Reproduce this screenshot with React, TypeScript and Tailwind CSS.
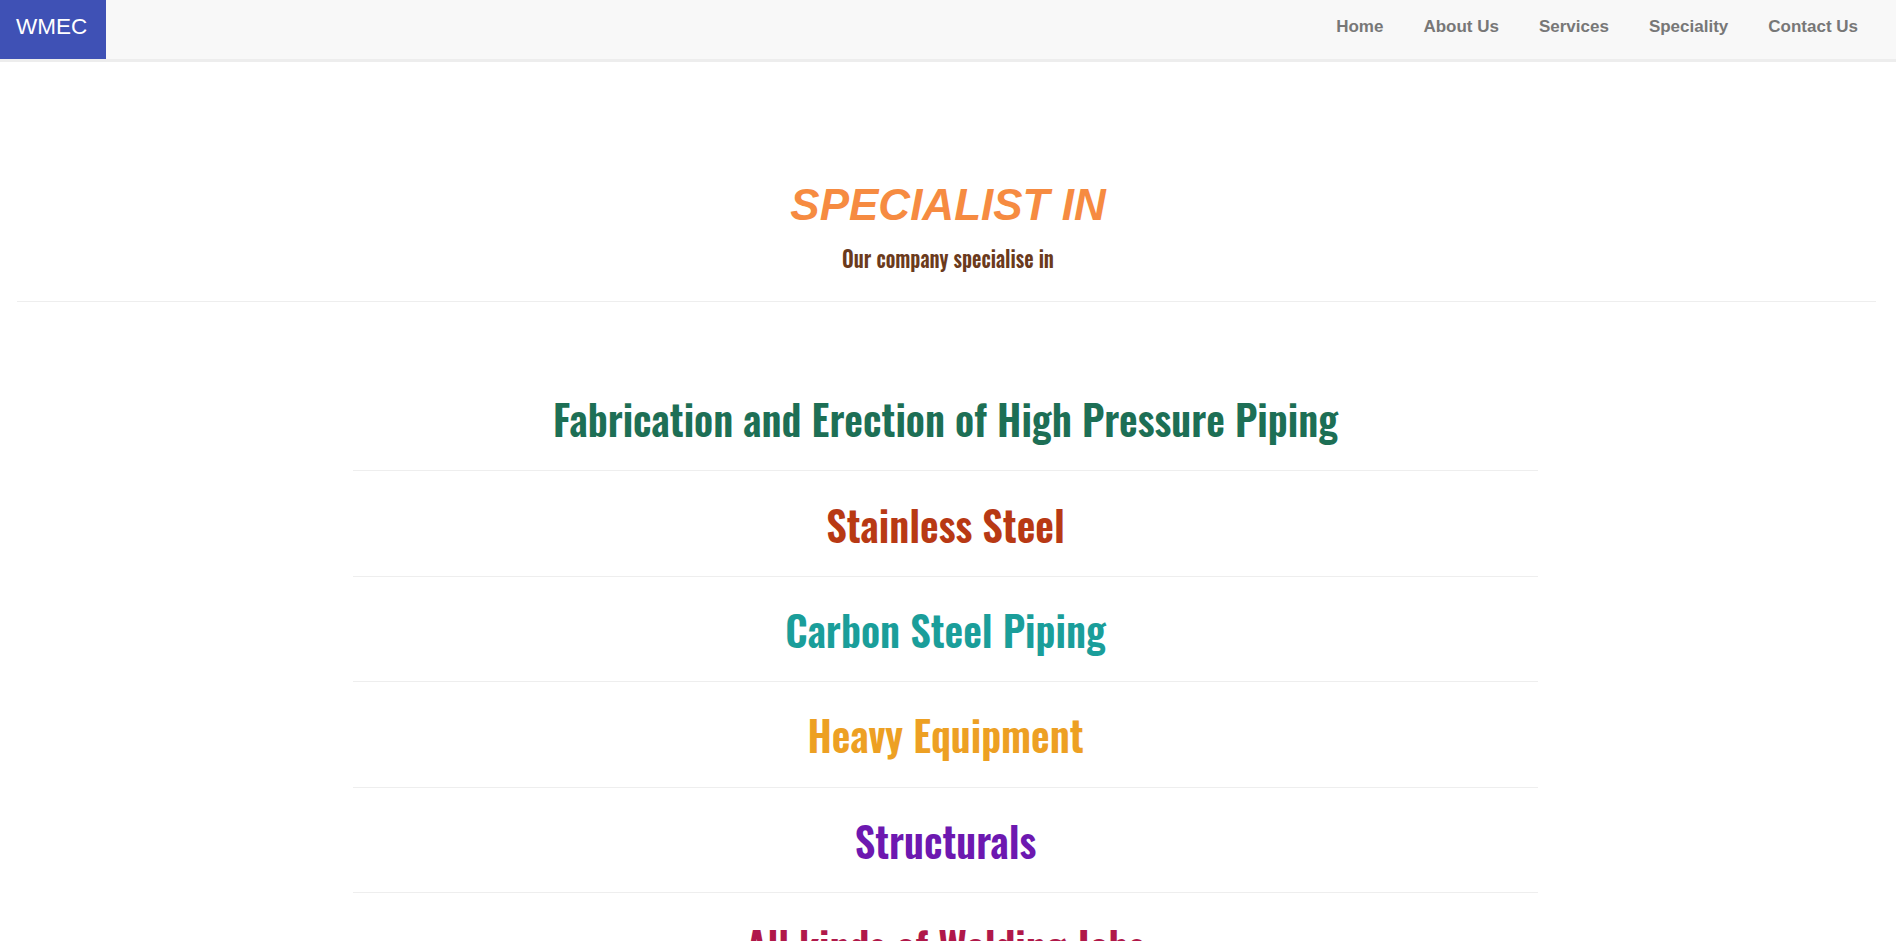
import React from "react";

const condensed = {
  fontFamily: "Oswald, 'Liberation Sans Narrow', 'DejaVu Sans Condensed', sans-serif",
};

const items: { text: string; color: string }[] = [
  { text: "Fabrication and Erection of High Pressure Piping", color: "text-[#1d6f55]" },
  { text: "Stainless Steel", color: "text-[#b83914]" },
  { text: "Carbon Steel Piping", color: "text-[#1a9e9a]" },
  { text: "Heavy Equipment", color: "text-[#eda023]" },
  { text: "Structurals", color: "text-[#6d18b0]" },
  { text: "All kinds of Welding Jobs", color: "text-[#b0184a]" },
];

const nav = ["Home", "About Us", "Services", "Speciality", "Contact Us"];

export default function App() {
  return (
    <div className="min-h-screen bg-white font-['Liberation_Sans',Arial,sans-serif]">
      <header className="flex h-[62px] border-b-[3px] border-[#ededed] bg-[#f8f8f8]">
        <div className="flex h-[59px] w-[106px] items-start bg-[#3f51b5] pl-[16px] pt-[14px]">
          <span className="text-[22.5px] leading-[26px] text-white">WMEC</span>
        </div>
        <nav className="ml-auto mr-[18px] flex items-start pt-[17px]">
          {nav.map((n) => (
            <a
              key={n}
              href="#"
              className="px-[20px] text-[17px] font-bold leading-[20px] text-[#777777]"
            >
              {n}
            </a>
          ))}
        </nav>
      </header>

      <section className="pt-[118px] text-center">
        <h1 className="text-[44px] font-bold italic leading-[50px] text-[#f68b41]">
          SPECIALIST IN
        </h1>
        <p
          className="mt-[16px] scale-y-[1.12] text-[20.4px] font-semibold leading-[24px] text-[#6b3a1c]"
          style={condensed}
        >
          Our company specialise in
        </p>
        <div className="ml-[17px] mr-[20px] mt-[31px] h-px bg-[#eeeeee]" />
      </section>

      <div className="mt-[64px] pr-[5px]">
        <div className="mx-auto w-[1185px]">
          {items.map((it) => (
            <div
              key={it.text}
              className="flex h-[105.4px] items-center justify-center border-b border-[#eeeeee]"
            >
              <h2
                className={`scale-y-[1.05] text-[40.6px] font-semibold leading-[50px] ${it.color}`}
                style={condensed}
              >
                {it.text}
              </h2>
            </div>
          ))}
        </div>
      </div>
    </div>
  );
}
